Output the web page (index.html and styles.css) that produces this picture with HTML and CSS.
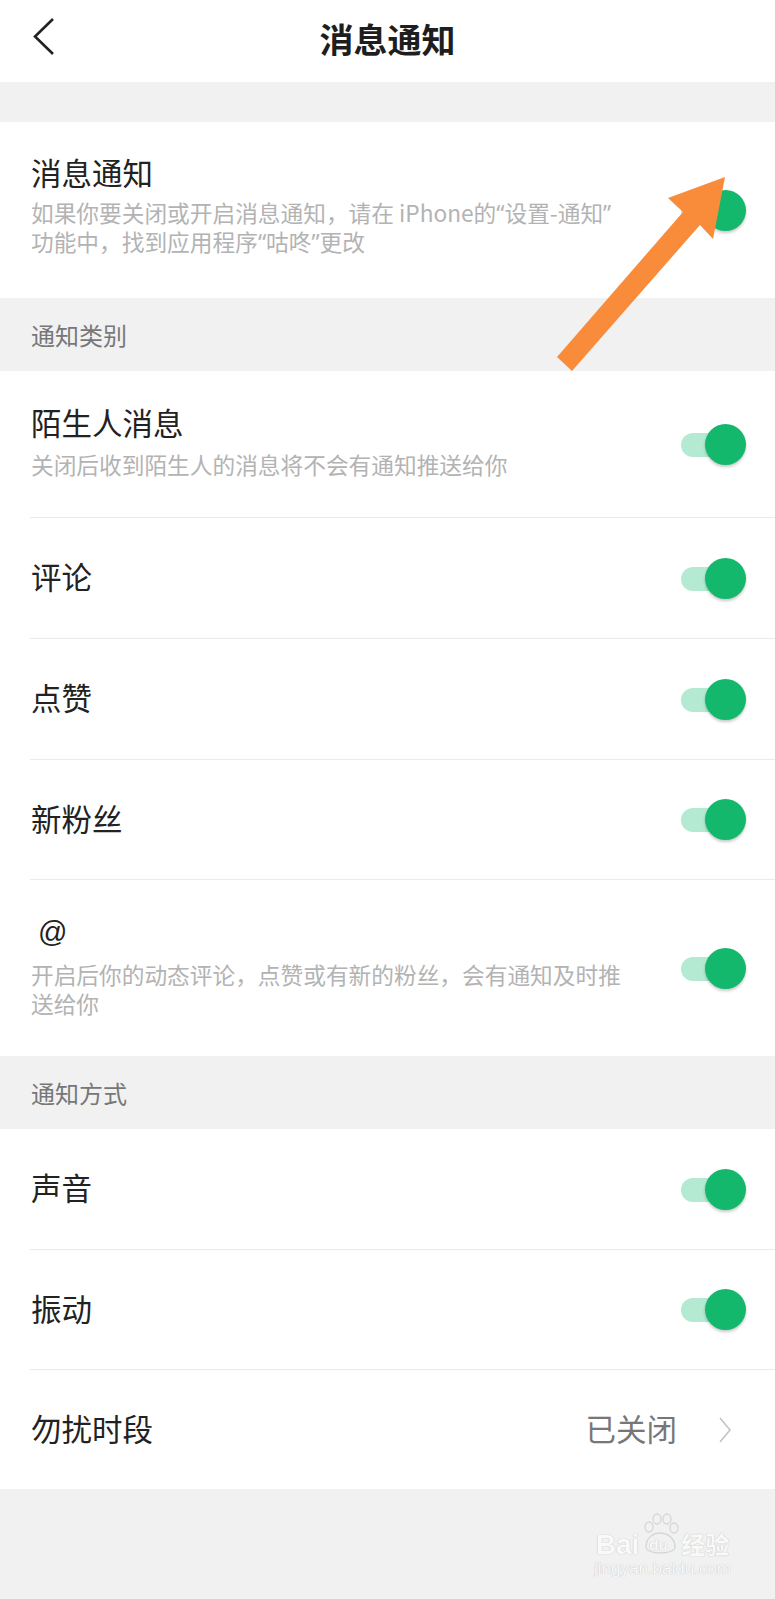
FILE: index.html
```html
<!DOCTYPE html>
<html lang="zh-CN">
<head>
<meta charset="utf-8">
<title>消息通知</title>
<link rel="stylesheet" href="styles.css">
</head>
<body>
<div class="page">
  <header class="topbar">
    <svg class="back" width="24" height="40" viewBox="0 0 24 40"><polyline points="21,2 3,19.5 21,37" fill="none" stroke="#222" stroke-width="2.6" stroke-linejoin="miter"/></svg>
    <h1 class="title">消息通知</h1>
  </header>
  <div class="spacer"></div>

  <section class="card first">
    <div class="row row-main">
      <div class="text">
        <div class="label">消息通知</div>
        <div class="desc"><span class="ln">如果你要关闭或开启消息通知，请在 iPhone的<span class="q">“</span>设置-通知<span class="q">”</span></span><span class="ln">功能中，找到应用程序<span class="q">“</span>咕咚<span class="q">”</span>更改</span></div>
      </div>
      <div class="switch"><span class="track"></span><span class="knob"></span></div>
    </div>
  </section>

  <div class="section-title">通知类别</div>

  <section class="card list">
    <div class="row h146">
      <div class="text">
        <div class="label">陌生人消息</div>
        <div class="desc">关闭后收到陌生人的消息将不会有通知推送给你</div>
      </div>
      <div class="switch"><span class="track"></span><span class="knob"></span></div>
    </div>
    <div class="row h121 line">
      <div class="text"><div class="label">评论</div></div>
      <div class="switch"><span class="track"></span><span class="knob"></span></div>
    </div>
    <div class="row h121 line">
      <div class="text"><div class="label">点赞</div></div>
      <div class="switch"><span class="track"></span><span class="knob"></span></div>
    </div>
    <div class="row h120 line">
      <div class="text"><div class="label">新粉丝</div></div>
      <div class="switch"><span class="track"></span><span class="knob"></span></div>
    </div>
    <div class="row h177 line">
      <div class="text">
        <div class="label at">@</div>
        <div class="desc"><span class="ln">开启后你的动态评论，点赞或有新的粉丝，会有通知及时推</span><span class="ln">送给你</span></div>
      </div>
      <div class="switch"><span class="track"></span><span class="knob"></span></div>
    </div>
  </section>

  <div class="section-title">通知方式</div>

  <section class="card list">
    <div class="row h120">
      <div class="text"><div class="label">声音</div></div>
      <div class="switch"><span class="track"></span><span class="knob"></span></div>
    </div>
    <div class="row h120 line">
      <div class="text"><div class="label">振动</div></div>
      <div class="switch"><span class="track"></span><span class="knob"></span></div>
    </div>
    <div class="row h120 line">
      <div class="text"><div class="label">勿扰时段</div></div>
      <div class="value">已关闭</div>
      <svg class="chev" width="14" height="26" viewBox="0 0 14 26"><polyline points="2,1 12,13 2,25" fill="none" stroke="#c4c4c4" stroke-width="1.6"/></svg>
    </div>
  </section>

  <footer class="footer">
    <div class="watermark">
      <div class="wm-top">
        <span class="wm-bai">Bai</span>
        <span class="wm-paw">
          <svg width="40" height="44" viewBox="0 0 40 44">
            <g fill="none" stroke="#d6d6d6" stroke-width="1.3">
              <ellipse cx="9" cy="14" rx="4" ry="5"/>
              <ellipse cx="17" cy="6" rx="4" ry="5"/>
              <ellipse cx="27" cy="6" rx="4" ry="5"/>
              <ellipse cx="34" cy="15" rx="4" ry="5"/>
              <path d="M6 34 C6 24 14 20 20 20 C27 20 35 25 35 34 C35 42 6 42 6 34 Z"/>
            </g>
          </svg>
          <span class="wm-du">du</span>
        </span>
        <span class="wm-jy">经验</span>
      </div>
      <div class="wm-url">jingyan.baidu.com</div>
    </div>
  </footer>

  <svg class="arrow" width="775" height="400" viewBox="0 0 775 400">
    <polygon points="725,177 668,198 683,212 557,357 572,371 700,225 713,239" fill="#f98c3b"/>
  </svg>
</div>
</body>
</html>
```

FILE: styles.css
```css
* { box-sizing: border-box; }

html, body {
  margin: 0;
  padding: 0;
}

body {
  background: #f1f1f1;
  font-family: "Noto Sans CJK SC", "Noto Sans", sans-serif;
  color: #222;
}

.page {
  position: relative;
  width: 775px;
  min-height: 1599px;
  background: #f1f1f1;
}

.topbar {
  height: 82px;
  background: #fff;
  display: flex;
  align-items: center;
  justify-content: center;
  position: relative;
}

.back {
  position: absolute;
  left: 32px;
  top: 17px;
}

.title {
  margin: 0 0 4px;
  font-size: 34px;
  font-weight: 700;
  line-height: 40px;
  color: #1e1e1e;
}

.spacer {
  height: 40px;
}

.card {
  background: #fff;
}

.list {
  padding-left: 30px;
}

.row {
  display: flex;
  align-items: center;
  padding-right: 29px;
}

.first .row {
  height: 176px;
  padding-left: 31px;
}

.first .text {
  padding-bottom: 10px;
}

.list .row {
  padding-left: 1px;
}

.line {
  border-top: 1px solid #ebebeb;
}

.h146 { height: 146px; }
.h121 { height: 121px; }
.h120 { height: 120px; }
.h177 { height: 177px; }

.text {
  flex: 1;
  padding-bottom: 4px;
}

.label {
  font-size: 30.5px;
  line-height: 36px;
  color: #222;
}

.label.at {
  padding-left: 7px;
  font-family: "Liberation Sans", "Noto Sans", sans-serif;
  font-size: 29px;
}

.desc {
  margin-top: 11px;
  font-size: 22.7px;
  line-height: 28.5px;
  color: #b3b3b3;
  white-space: nowrap;
}

.ln {
  display: block;
  height: 28.5px;
}

.q {
  font-family: "Noto Sans", "Liberation Sans", sans-serif;
}

.first .desc {
  margin-top: 9px;
}

.switch {
  position: relative;
  width: 65px;
  height: 41px;
  flex: none;
}

.track {
  position: absolute;
  left: 0;
  top: 9px;
  width: 54px;
  height: 24px;
  border-radius: 12px;
  background: #b3ead1;
}

.knob {
  position: absolute;
  right: 0;
  top: 0;
  width: 41px;
  height: 41px;
  border-radius: 50%;
  background: #13b86d;
  box-shadow: 0 2px 3px rgba(0, 0, 0, 0.22);
}

.value {
  font-size: 30.5px;
  line-height: 36px;
  color: #777;
  margin-right: 41px;
  padding-bottom: 4px;
}

.chev {
  flex: none;
  margin-right: 14px;
}

.section-title {
  height: 73px;
  display: flex;
  align-items: center;
  padding-left: 31px;
  font-size: 24px;
  color: #777;
}

.footer {
  height: 109px;
  display: flex;
  justify-content: flex-end;
  padding-right: 44px;
  padding-top: 22px;
}

.watermark {
  display: flex;
  flex-direction: column;
  align-items: center;
  color: #f9f9f9;
  text-shadow: 0 0 1px #c8c8c8, 0 0 1px #c8c8c8;
}

.wm-top {
  display: flex;
  align-items: flex-end;
  height: 46px;
}

.wm-bai {
  font-family: "Liberation Sans", sans-serif;
  font-weight: 700;
  font-size: 28px;
  line-height: 24px;
}

.wm-paw {
  position: relative;
  width: 40px;
  height: 44px;
  margin: 0 1px;
}

.wm-paw svg {
  display: block;
}

.wm-du {
  position: absolute;
  left: 9px;
  bottom: 4px;
  font-family: "Liberation Sans", sans-serif;
  font-weight: 700;
  font-size: 15px;
  line-height: 16px;
}

.wm-jy {
  font-size: 24px;
  line-height: 26px;
  font-weight: 700;
}

.wm-url {
  font-family: "Liberation Sans Narrow", "Liberation Sans", sans-serif;
  font-size: 17px;
  line-height: 20px;
  margin-top: 2px;
}

.arrow {
  position: absolute;
  left: 0;
  top: 0;
  pointer-events: none;
}
```
